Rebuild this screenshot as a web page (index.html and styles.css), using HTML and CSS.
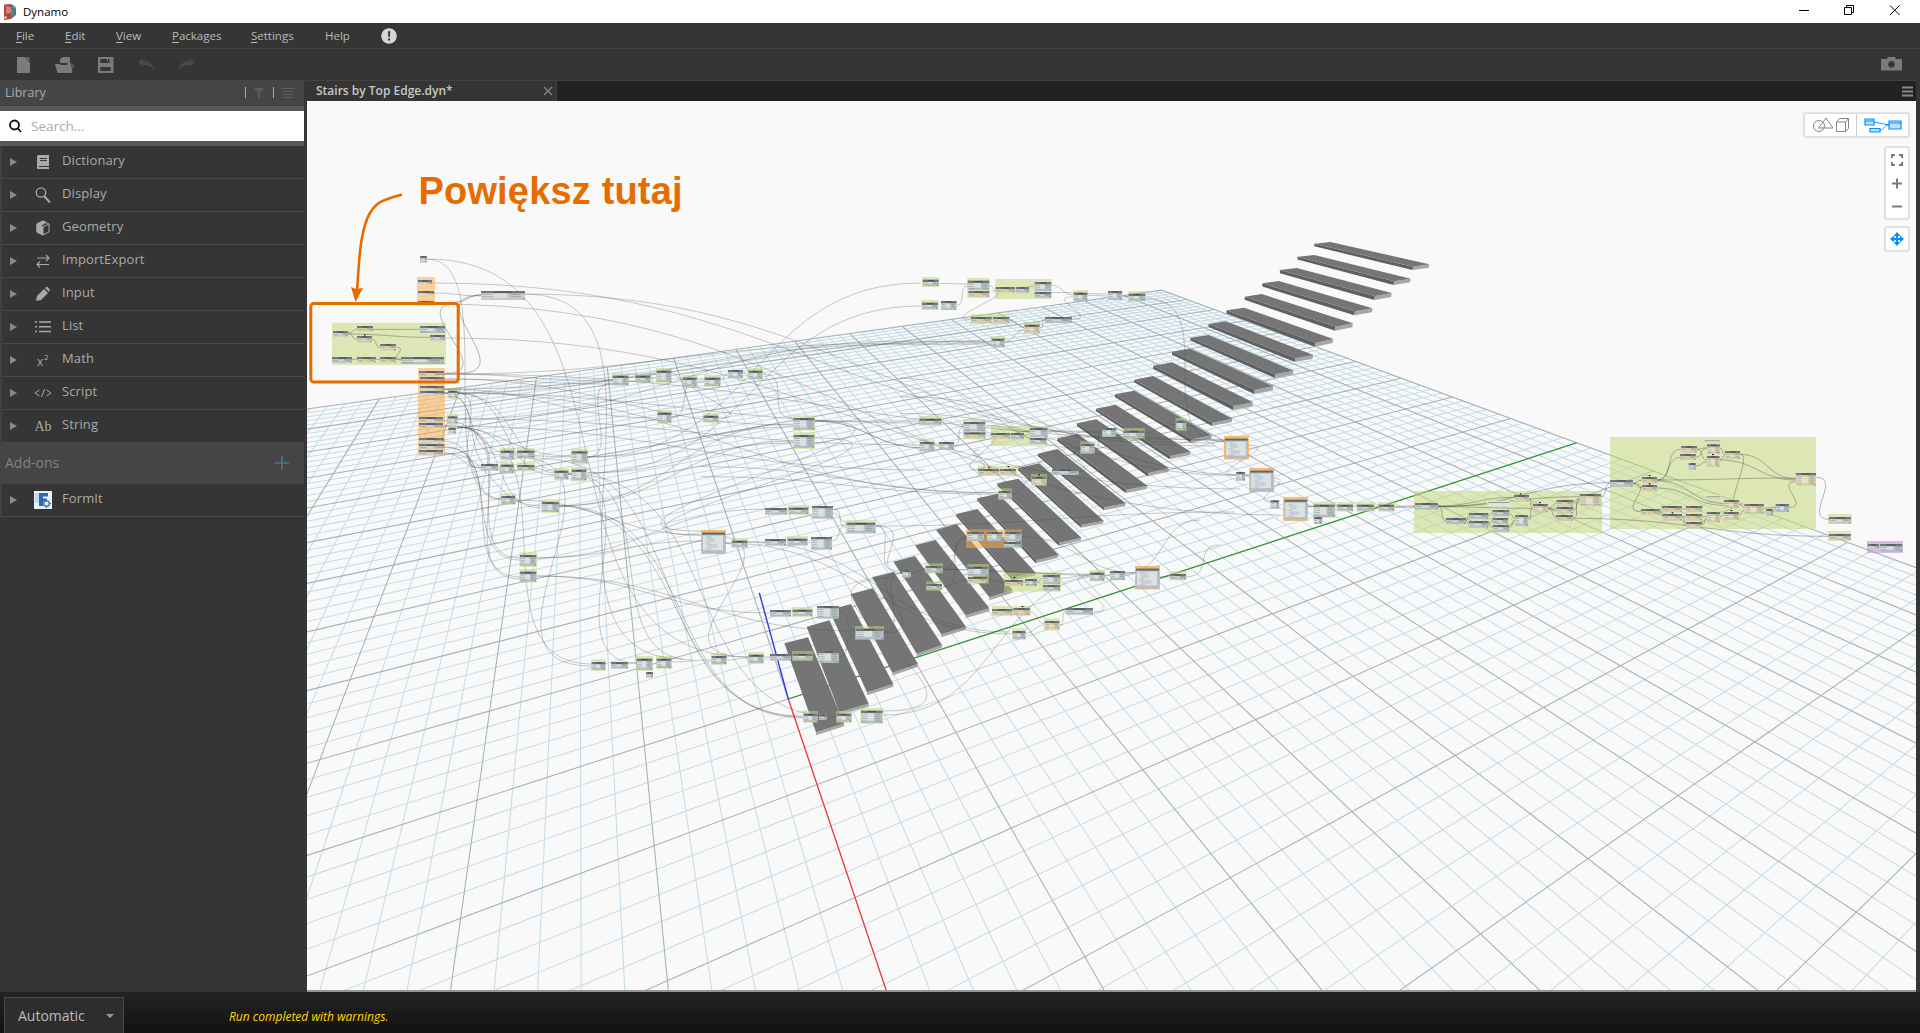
FILE: index.html
```html
<!DOCTYPE html>
<html lang="pl">
<head>
<meta charset="utf-8">
<title>Dynamo</title>
<link rel="stylesheet" href="styles.css">
</head>
<body>
<header class="titlebar">
  <svg class="app-icon" width="14" height="18" viewBox="0 0 14 18"><path d="M1 1.500l7-.5v15l-7 1z" fill="#a8453f"/><path d="M3 3l5 1v6l-5 1z" fill="#c9837c"/><path d="M8 1l5 3v8l-5 4z" fill="#4f7486"/><path d="M8 5l3 2v5l-3 2z" fill="#5a8a68"/><circle cx="2.500" cy="14.500" r="1.300" fill="#cfe0d8"/><circle cx="11.500" cy="4.500" r="1" fill="#8fc0e0"/><circle cx="2.500" cy="3" r="1" fill="#e05a4a"/></svg>
  <span class="app-name">Dynamo</span>
  <svg class="win-buttons" width="100" height="23" viewBox="0 0 100 23" fill="none" stroke="#000"><path d="M3 10.500h10M48.500 7.500h7v7h-7zM50.500 7.500v-2h7v7h-2M94 5.500l9.500 9.500M103.500 5.500L94 15"/></svg>
</header>
<nav class="menubar">
  <span class="m-file"><u>F</u>ile</span><span class="m-edit"><u>E</u>dit</span><span class="m-view"><u>V</u>iew</span><span class="m-packages"><u>P</u>ackages</span><span class="m-settings"><u>S</u>ettings</span><span class="m-help">Help</span>
  <svg width="16" height="16" viewBox="0 0 16 16"><circle cx="8" cy="8" r="7.800" fill="#d6d6d6"/><path d="M7 3.200h2.200l-.4 6H7.400zM7.100 10.600h2v2h-2z" fill="#333"/></svg>
</nav>
<div class="toolbar">
  <svg width="200" height="24" viewBox="0 0 200 24">
    <g fill="#7b7b7b"><path d="M17 4h7l6 6v10H17z"/><path d="M24 4h5.500v6z" fill="#666"/><path d="M60 10V6l3-2h7v6zM55 11h4.500l1.500 1h6l1-2h3l1.500 10H57.500zM72.500 12l1.500-1-1.500 6z"/><path fill-rule="evenodd" d="M98 4h15.500v16H98zM100.300 6v4h9.200V6zM100.300 14v4h10.400v-4z"/><path d="M107 6h1v2.500h-1z"/></g>
    <g fill="#454a4a"><path d="M138 9l5-4v2.500c6 0 10 4 12 10-4-4-7-5.500-12-5.500V13z"/><path d="M195 9l-5-4v2.500c-6 0-10 4-12 10 4-4 7-5.500 12-5.500V13z"/></g>
  </svg>
  <svg class="camera" width="21" height="15" viewBox="0 0 21 15"><path fill="#7b7b7b" fill-rule="evenodd" d="M0 2h6l1-2h7l1 2h6v11.500H0zM10.500 4a3.400 3.400 0 1 0 .01 0z"/></svg>
</div>
<main class="main">
  <aside class="sidebar">
    <div class="lib-head"><span>Library</span><svg width="46" height="14" viewBox="0 0 46 14"><path d="M1.500 1v11M29.500 1v11" stroke="#aaa"/><path d="M10 2h10l-4 5v6l-2-2V7z" fill="#5b5b5b"/><path d="M38 2.500h12M38 5.500h12M38 8.500h12M38 11.500h12" stroke="#5b5b5b"/></svg></div>
    <div class="search"><svg width="13" height="14" viewBox="0 0 13 14" fill="none" stroke="#111" stroke-width="1.800"><circle cx="5.500" cy="6" r="4.500"/><path d="M8.500 9l3.500 4"/></svg><span>Search...</span></div>
    <ul class="lib-list">
      <li><i></i><svg viewBox="0 0 18 18"><path fill="#a9a9a9" fill-rule="evenodd" d="M4 2h11v11H5v1h10v2H3V3zM6 5v1h7V5zM6 7v1h7V7z"/></svg><span>Dictionary</span></li>
      <li><i></i><svg viewBox="0 0 18 18" fill="none" stroke="#a9a9a9" stroke-width="1.300"><circle cx="7" cy="6.500" r="4.700"/><path d="M10 10l6 6.500" stroke-width="1.900"/></svg><span>Display</span></li>
      <li><i></i><svg viewBox="0 0 18 18" stroke="#a9a9a9" fill="none"><path d="M3 5l6-3 6 3v8l-6 3-6-3z"/><path d="M3 5l6 3v8l-6-3zM3 5l6-3 3 1.500-5 3z" fill="#a9a9a9"/><path d="M9 8l6-3"/></svg><span>Geometry</span></li>
      <li><i></i><svg viewBox="0 0 18 18" fill="none" stroke="#a9a9a9" stroke-width="1.200"><path d="M3 6h12M12 3l3 3-3 3M15 12.500H3M6 9.500l-3 3 3 3"/></svg><span>ImportExport</span></li>
      <li><i></i><svg viewBox="0 0 18 18" fill="#a9a9a9"><path d="M2 16l1-5 7-7 4 4-7 7zM11 3l2-1.500 3 3L15 7z"/></svg><span>Input</span></li>
      <li><i></i><svg viewBox="0 0 18 18" stroke="#a9a9a9" stroke-width="1.500"><path d="M1 4h2M5 4h12M1 8.700h2M5 8.700h12M1 13.500h2M5 13.500h12"/></svg><span>List</span></li>
      <li><i></i><svg viewBox="0 0 18 18"><text x="3" y="15" class="glyph">x</text><text x="10" y="9" class="glyph sup">2</text></svg><span>Math</span></li>
      <li><i></i><svg viewBox="0 0 18 18" fill="none" stroke="#a9a9a9"><path d="M5.500 6L1 9l4.500 3M12.500 6L17 9l-4.500 3M10.500 5l-3 8"/></svg><span>Script</span></li>
      <li><i></i><svg viewBox="0 0 18 18"><text x="0.500" y="14" class="glyph serif">Ab</text></svg><span>String</span></li>
    </ul>
    <div class="addons"><span>Add-ons</span><svg width="14" height="14" viewBox="0 0 14 14" stroke="#40788a" stroke-width="1.700"><path d="M7 0v14M0 7h14"/></svg></div>
    <ul class="lib-list"><li><i></i><svg viewBox="0 0 18 18"><path fill="#e8eff8" d="M0 0h18v18H0z"/><path fill="#c3d8ef" d="M1 2h4v10H1z"/><path fill="#286bb0" d="M5 2h9v3.500H9v2h4v3H9V15H5z"/><circle cx="12.500" cy="12.500" r="2.800" fill="#e8eff8" stroke="#4777a8" stroke-width="1.400"/><path d="M12.500 8v1.500M12.500 15.500V17M8 12.500h1.500M15.500 12.500H17" stroke="#4777a8"/></svg><span>FormIt</span></li></ul>
  </aside>
  <section class="workspace">
    <div class="tabs"><div class="tab"><span>Stairs by Top Edge.dyn*</span><svg width="10" height="10" viewBox="0 0 10 10" stroke="#858585" stroke-width="1.400"><path d="M1 1l8 8M9 1L1 9"/></svg></div><svg class="tab-menu" width="11" height="11" viewBox="0 0 11 11" stroke="#8a8a8a" stroke-width="2"><path d="M0 1.500h11M0 5.500h11M0 9.500h11"/></svg></div>
    <div class="canvas">
      <svg id="stage" width="1609" height="889" viewBox="307 101 1609 889">
        <g id="grid"></g><g id="stairs"></g><g id="groups"></g><g id="wires"></g><g id="nodes"></g>
        <g fill="none" stroke="#e66c00" stroke-width="3"><rect x="310.800" y="303.500" width="147.400" height="78.600" rx="3"/><path d="M402 194.500C382 200 374 202 367 219C359 240 359 268 357 290" stroke-width="2.600"/></g>
        <path d="M351 287l5 2 7-1-7.500 14z" fill="#e66c00"/>
        <text class="callout" x="418.500" y="204" textLength="264">Powiększ tutaj</text>
      </svg>
      <div class="view-toggle">
        <div><svg width="38" height="16" viewBox="0 0 38 16" fill="none" stroke="#858585"><circle cx="7" cy="9" r="5.500"/><path d="M14 1L6.500 11H21zM24.500 5h9v9.500h-9zM24.500 5l3-3.500h9v10l-3 3M33.500 5l3-3.500"/></svg></div>
        <div><svg width="38" height="16" viewBox="0 0 38 16" fill="#bfe3ff" stroke="#0091ff" stroke-width="1.200"><path d="M1 2h9v6H1zM1 4h9M6 11.500h10V15H6zM25 4h12v8H25zM25 6h12"/><path d="M10 5l15 3M16 13c5 0 3-5 9-5" fill="none" stroke-width=".9"/></svg></div>
      </div>
      <div class="zoom-box"><svg width="24" height="72" viewBox="0 0 24 72" fill="none" stroke="#7a7a7a" stroke-width="2"><path d="M7 11V8h3M14 8h3v3M17 15v3h-3M10 18H7v-3M7 36.500h10M12 31.500v10M7 59.500h10"/></svg></div>
      <div class="pan-box"><svg width="24" height="24" viewBox="0 0 24 24" stroke="#0091ff" stroke-width="2" fill="#0091ff"><path d="M12 8v8M8 12h8"/><path stroke="none" d="M12 5l3.500 4h-7zM12 19l3.500-4h-7zM5 12l4-3.500v7zM19 12l-4-3.500v7z"/></svg></div>
    </div>
  </section>
</main>
<footer class="statusbar">
  <div class="run-mode"><span>Automatic</span><b></b></div>
  <em>Run completed with warnings.</em>
</footer>
<script src="scene.js"></script>
</body>
</html>
```
FILE: styles.css
```css
* { box-sizing: border-box; }
body { margin: 0; width: 1920px; height: 1033px; overflow: hidden; display: flex; flex-direction: column; background: #353535; color: #b9b9b9; font: 12px "Open Sans", sans-serif; }
.titlebar { height: 23px; flex: none; background: #fff; color: #000; display: flex; align-items: center; padding-left: 3px; }
.app-name { margin-left: 6px; font-size: 11.5px; }
.win-buttons { margin-left: auto; margin-right: 24px; overflow: visible; }
.menubar { height: 26px; flex: none; border-bottom: 1px solid #444; display: flex; align-items: center; padding-left: 16px; font-size: 11.5px; }
.menubar u { text-underline-offset: 2px; }
.m-file { width: 49px; }
.m-edit { width: 51px; }
.m-view { width: 56px; }
.m-packages { width: 79px; }
.m-settings { width: 74px; }
.m-help { width: 56px; }
.toolbar { height: 31px; flex: none; display: flex; align-items: center; justify-content: space-between; }
.camera { margin-right: 18px; }
.main { display: flex; height: 912px; flex: none; }
.sidebar { width: 304px; flex: none; }
.lib-head { height: 26px; background: #454545; display: flex; align-items: center; justify-content: space-between; padding: 0 12px 1px 5px; font-size: 12.5px; color: #aaa; }
.lib-head svg { overflow: visible; margin-right: 2px; }
.search { height: 40px; border: solid #595959; border-width: 5px 0; background: #fff; display: flex; align-items: center; padding: 0 0 1px 9px; gap: 9px; color: #aaa; font-size: 13.5px; }
.lib-list { list-style: none; margin: 0; padding: 0; border-left: 2px solid #404040; }
.lib-list li { height: 33px; border-bottom: 1px solid #494949; display: flex; align-items: center; padding-left: 8px; font-size: 13px; color: #aaa; }
.lib-list li > span { letter-spacing: .12px; padding-bottom: 5px; }
.lib-list i { border-left: 7px solid #8a8a8a; border-top: 4px solid transparent; border-bottom: 4px solid transparent; margin-right: 17px; }
.lib-list svg { width: 18px; height: 18px; margin-right: 10px; }
.glyph { fill: #a9a9a9; font: 12px "Open Sans", sans-serif; }
.glyph.sup { font-size: 8px; }
.glyph.serif { font: 14px "Liberation Serif", serif; }
.addons { height: 41px; background: #454545; display: flex; align-items: center; justify-content: space-between; padding: 0 15px 2px 5px; font-size: 14px; color: #828282; }
.workspace { width: 1609px; margin-left: 3px; display: flex; flex-direction: column; }
.tabs { height: 21px; background: #222; border-top: 1px solid #414141; display: flex; align-items: center; justify-content: space-between; padding-right: 3px; }
.tab { width: 250px; height: 20px; background: #353535; border-right: 1px solid #444; display: flex; align-items: center; justify-content: space-between; padding: 0 3px 0 9px; font-size: 12px; font-weight: 600; color: #c8c8c8; }
.tab span { padding-bottom: 2px; }
.canvas { position: relative; height: 891px; background: #f9f9f9; border-bottom: 2px solid #969696; overflow: hidden; }
#stage { display: block; }
.view-toggle, .zoom-box, .pan-box { position: absolute; background: #fff; border: 1px solid #ddd; border-radius: 2px; box-shadow: 0 0 2px #aaa; display: flex; align-items: center; justify-content: center; }
.view-toggle { left: 1497px; top: 12px; width: 105px; height: 24px; }
.view-toggle div { flex: 1; height: 22px; display: flex; align-items: center; justify-content: center; }
.view-toggle div + div { border-left: 1px solid #ccc; }
.zoom-box { left: 1578px; top: 46px; width: 24px; height: 72px; }
.pan-box { left: 1578px; top: 126px; width: 24px; height: 24px; }
.zoom-box svg, .pan-box svg { flex: none; }
.callout { font: bold 38px "Liberation Sans", sans-serif; fill: #e66c00; }
.statusbar { height: 41px; flex: none; background: linear-gradient(#232323, #121212); display: flex; }
.run-mode { margin: 5px 0 0 4px; width: 120px; height: 36px; border: 1px solid #4a4a4a; border-bottom: 0; background: #2d2d2d; display: flex; align-items: center; justify-content: space-between; padding: 0 9px 0 13px; font-size: 14px; color: #bebebe; }
.run-mode b { border-top: 4px solid #999; border-left: 4px solid transparent; border-right: 4px solid transparent; }
.statusbar em { margin: 16px 0 0 105px; font-size: 12px; color: #ffd800; }
```
FILE: scene.js
```js
const NS = 'http://www.w3.org/2000/svg';
const layer = id => document.getElementById(id);
function add(parent, tag, attrs) {
  const e = document.createElementNS(NS, tag);
  for (const k in attrs) e.setAttribute(k, attrs[k]);
  parent.appendChild(e);
}

// Ground plane: perspective projection of a 100 x 100 unit grid.
function project(u, v) {
  const a = 0.024146 * u, b = 0.013953 * v, w = 1 + a + b;
  return [(788.3 + a * 578.7 + b * 2707) / w, (699 + (a + b) * 75.5) / w, w];
}
function segment(u1, v1, u2, v2, color, width) {
  const w1 = 1 + 0.024146 * u1 + 0.013953 * v1, w2 = 1 + 0.024146 * u2 + 0.013953 * v2, near = 0.2;
  if (w1 < near && w2 < near) return;
  if (w1 < near) { const t = (near - w1) / (w2 - w1); u1 += (u2 - u1) * t; v1 += (v2 - v1) * t; }
  else if (w2 < near) { const t = (near - w2) / (w1 - w2); u2 += (u1 - u2) * t; v2 += (v1 - v2) * t; }
  const p = project(u1, v1), q = project(u2, v2);
  add(layer('grid'), 'path', { d: `M${p[0]} ${p[1]}L${q[0]} ${q[1]}`, stroke: color, 'stroke-width': width, fill: 'none' });
}
for (const major of [false, true])
  for (let i = -50; i <= 50; i++) {
    if ((i % 5 === 0) !== major) continue;
    const c = major ? '#a3b1b9' : '#c6dce8';
    segment(i, -50, i, 50, c, 1.05); segment(-50, i, 50, i, c, 1.05);
  }
segment(0, 0, 0, 50, '#2d9a2d', 1.2);
segment(0, 0, -50, 0, '#ff3030', 1.2);
add(layer('grid'), 'path', { d: 'M759.3 592.7L788.3 699', stroke: '#3535f0', 'stroke-width': 1.4 });

// Treads: left-front, left-back, right-back, right-front corners, then thickness.
const upper = [
[1203,11,1250,6,1537,73,1490,80,10],[1154,50,1203,45,1483,116,1435,124,11],[1103,90,1152,84,1428,159,1379,168,12],
[1052,130,1100,123,1372,205,1321,214,12],[1001,170,1050,162,1315,250,1265,260,12],[948,211,1000,203,1258,297,1207,308,12],
[896,252,946,244,1200,345,1148,355,11],[843,293,896,285,1143,392,1090,403,11],[790,335,842,326,1084,439,1030,450,12],
[735,377,790,367,1025,487,969,498,12],[680,419,735,408,965,536,907,548,10],[624,463,680,452,905,586,847,598,10],
[569,506,626,494,844,635,785,648,10],[514,550,570,538,781,685,721,699,10],[457,595,516,582,718,737,657,749,10]];
const lower = [
[1013,-19,1072,-33,1277,130,1213,142],[954,24,1018,10,1211,182,1145,195],[892,70,955,56,1144,233,1078,248],
[832,115,894,101,1076,285,1009,301],[769,162,832,147,1007,338,940,353],[708,210,770,193,938,390,868,412],
[645,256,707,240,868,445,797,466],[580,305,645,288,798,500,724,523],[516,352,582,336,726,555,650,581],
[452,402,518,385,654,612,577,638],[387,450,453,432,580,672,501,697],[320,500,388,481,506,731,418,756],[253,550,324,532,432,790,348,817]];
function tread(s, X, Y, t, side) {
  const p = [0, 2, 4, 6].map(i => [X(s[i]), Y(s[i + 1])]), g = layer('stairs');
  const poly = (pts, fill) => add(g, 'polygon', { points: pts.map(q => q.join()).join(' '), fill });
  const dn = q => [q[0] - (side ? .6 : 0), q[1] + t];
  if (side) poly([p[0], p[3], dn(p[3]), [p[0][0], p[0][1] + t * .8]], '#606060');
  poly([p[3], p[2], dn(p[2]), dn(p[3])], '#a6a6a6');
  poly(p, '#757575');
}
upper.forEach(s => tread(s, x => 900 + x / 2.9037, y => 240 + y / 3, s[8] / 3, true));
lower.forEach((s, i) => tread(s, x => 700 + x / 3, y => 460 + y / 3, 2.8, i < 5));

const groupFill = { g: '#c1d676', o: '#ffa73f', p: '#bb84cc' };
const body = { b: '#b3bfc2', t: '#d4cca8', w: '#cbc7bf' };
function group(c, x, y, w, h, k = 'g') {
  add(layer('groups'), 'rect', { x: c.X(x), y: c.Y(y), width: w / c.kx, height: h / c.ky, fill: groupFill[k], opacity: .52 });
}
function node(c, x, y, w, h, k = 'b') {
  const g = layer('nodes'), X = c.X(x), Y = c.Y(y), W = w / c.kx, H = h / c.ky;
  const r = (x, y, width, height, fill, opacity = 1) => add(g, 'rect', { x, y, width, height, fill, opacity });
  r(X, Y, W, H, body[k]);
  r(X, Y, W, 2.3, '#70777a');
  r(X + W * .3, Y + .5, W * .4, 1, '#444b4e');
  const mid = Math.max(1.2, H - 4.6);
  r(X + .5, Y + 2.4, W * .58, mid, k === 't' ? '#e8dfcb' : '#dadfe1');
  for (let q = Y + 3; q < Y + H - 1.5; q += 2.3) {
    r(X + 1, q, W * .25, .8, '#8d9394', .7);
    r(X + W - W * .32, q, W * .22, .9, '#8b9698', .7);
  }
  if (k === 't') r(X + W * .38, Y + 2.5, W * .22, 1.5, '#e5bd72', .7);
  r(X + W - 1.6, Y + H - 1.4, 1.1, .9, '#5f686b');
}
function framed(c, x, y, w, h, k) { group(c, x, y, w, h); node(c, x + 2, y + 8, w - 4, h - 11, k); }
function code(c, x, y, w, h) {
  group(c, x, y, w, h, 'o'); group(c, x, y, w, h, 'o');
  const g = layer('nodes'), X = c.X(x) + 1, Y = c.Y(y) + 2.6, W = w / c.kx - 2, H = h / c.ky - 3.4;
  add(g, 'rect', { x: X, y: Y, width: W, height: H, fill: '#b3bfc2' });
  add(g, 'rect', { x: X, y: Y, width: W, height: 2, fill: '#5f696c' });
  add(g, 'rect', { x: X + 1, y: Y + 3, width: W - 3, height: H - 6, fill: '#dbe2e3' });
  [6, 8, 7, 5, 11, 9, 6].forEach((n, i) => add(g, 'rect', { x: X + 3.5 + i % 3, y: Y + 4 + i * 2, width: n, height: .7, fill: i > 3 ? '#b5a5bf' : '#a5aeb0' }));
}
const frame = (x, y, kx, ky) => ({ X: v => x + v / kx, Y: v => y + v / ky, kx, ky });
function cluster(c, { groups = [], nodes = [], framed: f = [], codes = [] }) {
  groups.forEach(a => group(c, ...a)); f.forEach(a => framed(c, ...a));
  nodes.forEach(a => node(c, ...a)); codes.forEach(a => code(c, ...a));
}
const A = frame(300, 150, 3, 3), B = frame(400, 360, 3, 3), C = frame(700, 460, 3, 3);
const D = frame(900, 240, 2.9037, 3), E = frame(1300, 400, 2.529, 3), P = frame(0, 0, 1, 1);

cluster(A, {
  groups: [[96,518,342,127],[351,381,54,86,'o'],[354,654,81,263,'o']],
  nodes: [[360,318,21,20,'w'],[543,423,132,27,'w'],[99,543,45,17,'w'],[171,528,48,16,'t'],[171,558,45,20,'t'],[240,582,48,20,'t'],[360,528,75,21],[390,555,45,17,'w'],[96,621,60,17],[171,621,57,17,'t'],[240,621,48,17,'t'],[303,621,129,21],
    [354,390,42,12,'w'],[354,423,48,10,'w'],[354,453,48,9,'w'],[357,663,75,14,'w'],[360,681,72,13,'w'],[360,708,72,13,'w'],[360,723,72,12,'w'],[357,801,72,14,'w'],[357,819,72,14,'w'],[357,864,75,11,'w'],[357,882,75,14,'w'],[357,900,72,14,'w'],[445,833,23,18,'w'],[1284,660,45,25]],
  framed: [[442,714,33,33,'w'],[441,791,33,33,'w'],[936,669,51,39],[1005,669,48,30],[1068,654,48,45],[1146,675,46,37],[1212,675,51,36],[1344,654,45,36],[1071,780,45,40],[1209,789,48,30]]
});
cluster(B, {
  nodes: [[243,312,51,20],[1095,444,66,20],[1236,438,63,38],[1095,537,63,20],[1233,531,63,38],[1110,750,63,20],[1251,738,66,38],[1110,882,63,20],[1255,873,62,36],[633,906,51,20],[738,936,21,17,'w']],
  framed: [[300,264,44,36],[350,264,55,32],[513,266,51,45],[300,306,43,36],[350,307,55,27],[462,324,45,36],[513,321,48,43],[302,400,45,35],[424,418,54,41],[358,577,53,44],[358,627,53,41],[1179,166,66,46],[1179,217,66,50],[1164,435,63,30],[1338,480,90,42],[1161,528,63,30],[994,534,50,30],[1176,741,63,30],[1365,798,87,42],[1176,873,63,30],[933,880,48,35],[1044,876,48,36],[573,898,45,35],[708,888,51,45],[768,888,48,39]],
  codes: [[903,510,75,72]]
});
cluster(C, {
  groups: [[834,18,118,30],[798,208,168,56,'o'],[802,312,65,59],[912,337,171,58],[876,438,116,30]],
  nodes: [[834,27,63,18,'t'],[900,27,48,18,'t'],[1056,27,81,18],[801,216,51,27],[861,216,46,27],[914,216,50,27],[911,246,51,15],[606,330,27,23],[804,320,61,28],[804,351,58,18,'t'],[915,360,54,18,'t'],[975,357,36,21],[1029,345,51,27],[1029,375,51,17],[1230,333,45,27],[876,447,61,18,'t'],[940,444,50,21,'t'],[1098,444,81,20],[357,763,24,17]],
  framed: [[993,42,48,36,'t'],[894,85,42,35],[675,310,54,30],[678,364,50,28],[1168,330,47,35],[1408,334,52,27],[1032,475,48,36,'t'],[936,505,42,35],[309,753,45,36],[408,753,48,36],[481,744,68,48]],
  codes: [[1305,318,75,70]]
});
cluster(D, {
  groups: [[195,114,66,60],[276,117,165,60],[205,222,114,30],[183,538,66,60],[264,558,165,60]],
  nodes: [[119,183,45,27],[197,122,62,28],[199,153,60,18,'t'],[278,141,56,17,'t'],[337,141,38,17],[391,126,48,27],[391,156,48,17],[604,153,41,27],[206,231,60,18,'t'],[270,231,47,18,'t'],[421,231,78,18],[113,606,44,24],[185,546,62,28],[186,577,62,18,'t'],[264,579,56,18,'t'],[322,579,38,18],[377,564,51,27],[377,594,48,18],[587,564,41,27],[976,696,26,26]],
  framed: [[64,111,50,30],[62,180,50,30],[503,150,43,36],[662,153,52,32],[360,246,47,36,'t'],[264,288,41,36],[55,528,67,29],[56,598,45,38],[646,564,65,33],[800,534,32,39],[523,604,43,38]],
  codes: [[941,588,72,70],[1014,684,72,72]]
});
code(P, 1283.4, 497.2, 24.5, 23.7);
node(P, 1270.6, 500.3, 8.5, 8.5);
cluster(E, {
  groups: [[288,273,476,126],[784,111,521,276],[1335,342,61,30],[1335,393,58,30],[1434,423,91,36,'p']],
  nodes: [[35,351,21,21],[291,309,58,20],[369,354,51,18],[427,339,49,18],[427,363,50,20],[487,330,42,18],[487,354,39,18],[487,375,42,20],[544,345,33,33],[541,285,38,20,'t'],[589,312,38,26,'t'],[649,300,42,20,'t'],[649,321,42,20,'t'],[647,345,43,18,'t'],[708,282,53,36,'t'],
    [784,240,58,20],[964,138,40,20,'t'],[961,162,40,18,'t'],[983,189,18,20],[1029,133,33,28,'t'],[1029,168,32,33,'t'],[1075,153,38,24,'t'],[865,231,38,18,'t'],[865,255,38,18,'t'],[1072,300,38,24,'t'],[1124,312,49,30,'t'],[1179,327,17,20],[1203,312,34,24],[862,327,48,18,'t'],[915,318,51,18,'t'],[917,342,49,20,'t'],[976,318,41,18,'t'],[976,342,41,20,'t'],[976,366,41,20,'t'],[1029,336,33,32,'t'],[1072,336,38,24,'t'],[1254,219,51,38,'t'],
    [1338,351,55,20,'w'],[1338,402,55,18,'w'],[1436,432,28,12],[1467,432,56,24]],
  framed: [[33,306,57,48],[93,306,43,29],[142,306,47,29],[197,306,43,29]]
});
// Free-standing notes and warning badges.
[[473,303,60,15],[1021,118,45,8],[1026,286,40,7]].forEach(n => {
  const a = { x: E.X(n[0]), y: E.Y(n[1]), width: n[2] / E.kx, height: n[3] / E.ky };
  add(layer('nodes'), 'rect', { ...a, fill: '#e4e2dd' });
  add(layer('nodes'), 'rect', { x: a.x + 1, y: a.y + 1, width: a.width - 2, height: .9, fill: '#8f8f8f' });
});
const dot = (c, x, y, fill) => add(layer('nodes'), 'rect', { x: c.X(x), y: c.Y(y), width: 1.6, height: 1.1, fill });
[[556,280],[605,306],[882,225],[882,250],[1042,162],[940,337],[1089,330]].forEach(d => dot(E, ...d, '#000'));
[[732,276],[982,132],[1090,145],[669,294],[938,312],[995,312],[1146,306],[1088,294],[1278,214],[1044,330],[995,337]].forEach(d => dot(E, ...d, '#f4e36a'));
[[865,22],[923,18],[1015,43],[941,351],[965,438]].forEach(d => dot(C, ...d, '#000'));
[[192,522],[262,577],[197,613],[262,613]].forEach(d => dot(A, ...d, '#f4e36a'));
dot(A, 192, 553, '#000');

// Connectors leave and arrive horizontally.
function wires(c, list, alpha = .28) {
  list.forEach(([x1, y1, x2, y2, k = .45]) => {
    const a = c.X(x1), b = c.Y(y1), e = c.X(x2), f = c.Y(y2), o = Math.hypot(e - a, f - b) * k;
    add(layer('wires'), 'path', { d: `M${a} ${b}C${a + o} ${b} ${e - o} ${f} ${e} ${f}`, fill: 'none', stroke: '#444', 'stroke-opacity': alpha, 'stroke-width': 1 });
  });
}
wires(P, [
[427,259,748,657],[427,259,503,500,.3],[433,283,1215,443],[434,293,481,296],[525,294,1215,446],[525,294,683,659],[434,304,1280,515],[445,338,1240,489],
[444,374,612,381],[444,374,1225,440],[444,379,793,425],[444,379,612,384],[444,389,657,418],[444,389,985,341],[444,393,500,455],[444,393,500,470],[444,393,925,423],[444,420,516,455],[444,426,925,470],[444,426,571,456],[444,441,503,499],[444,447,520,560],[444,447,520,577],[444,453,481,468],[444,453,541,506],
[457,393,481,468],[457,393,555,475],[457,419,925,445],[457,427,520,558],[457,427,520,579],[457,427,541,508],[457,393,994,493],[457,393,571,474],[457,427,591,664],
[534,456,571,457],[534,468,555,473],[515,457,591,666,.6],[568,474,637,663],[568,474,693,660],[587,457,612,383],[587,457,793,427],[587,473,793,443],[559,506,793,441],[559,506,793,424],[537,558,765,509],[537,558,701,541],[537,576,770,613],[537,576,855,631],[515,500,701,535],[559,506,803,717],[550,505,805,718],[535,458,803,716],[568,474,837,717],
[815,421,701,531,1.1],[815,438,701,535,1.1],[748,542,765,542],[724,543,732,544],[724,543,1012,634],[748,542,1010,632],
[833,513,846,522],[832,541,846,525],[876,526,905,573,.8],[839,611,855,630],[839,657,855,635],[883,633,905,573,.9],
[616,665,637,663],[672,662,711,660],[727,660,748,658],[748,657,770,657],[883,711,895,578,1.1],[628,374,637,374],[650,374,656,374],[672,373,682,380],[698,380,704,380],[721,380,728,373],[743,373,748,374],[763,374,793,418,.55],[671,418,698,378],[719,418,704,382,1.2],
[815,421,925,421],[815,421,925,448],[876,526,1235,512],[705,535,748,657,.9],
[587,457,921,283],[587,473,921,306],[815,421,925,448]]);
wires(C, [
[403,148,438,202],[527,197,582,330],[633,340,678,325],[730,328,800,230],[730,380,800,235],[730,328,802,330],[730,328,1168,342],[866,360,915,368],[730,380,802,360],[866,335,1168,345],[969,368,975,368],[1011,368,1029,355],[1080,355,1168,345],[1215,346,1230,346],[1275,346,1305,340],[1380,350,1408,350],[1179,456,1168,348,1.1],[1080,495,1098,456],[976,520,1032,495],[990,456,1032,490],[549,765,1235,345,.45],[1275,340,1500,180],[965,230,1305,338],[550,516,606,340],[936,102,993,62],[1040,62,1056,38],[834,28,840,-30,1.1],[0,20,894,98],[0,50,894,103],[1460,350,1560,255,.6]]);
wires(D, [[112,130,197,132],[164,196,197,138],[260,136,278,150],[335,150,391,138],[440,136,503,165],[440,157,604,162],[545,166,604,168],[645,168,662,170],[714,176,941,605,.48],[265,153,204,238,.9],[318,240,360,262],[407,265,421,238],[499,238,503,170,1.3],[0,304,264,304],[0,310,264,308],[0,314,264,312],[304,305,360,270],[121,540,185,560],[157,617,185,562],[250,556,377,575],[360,587,377,580],[428,573,587,574],[428,575,941,600],[566,626,587,578],[628,576,646,582],[695,582,800,553],[519,695,523,630,1],[830,555,941,606],[1013,615,976,705,1.1],[1002,707,1014,707],[1085,715,1075,785,1],[250,587,226,690,.9],[0,414,523,625],[0,470,1014,705],[0,520,976,706]]);
wires(P, [[457,419,900,341.300],[445,374,900,343.300],[445,393,900,344.600]]);
wires(E, [[0,307,35,320],[20,320,35,320],[90,320,95,320],[136,320,142,320],[188,320,198,320],[240,319,291,318],[240,322,291,321],[349,320,369,362],[349,318,541,292],[349,319,708,290],[349,320,784,248],[349,320,589,325],[420,362,427,348],[420,362,427,372],[476,348,487,338],[476,372,487,363],[476,372,487,383],[529,340,544,355],[529,383,544,360],[578,358,589,325],[578,295,589,322],[628,325,649,310],[628,325,649,330],[628,325,649,353],[691,310,708,295],[691,330,708,300],[691,353,708,305],[691,355,1338,409],[761,290,784,250],[842,250,865,240],[842,250,865,263],[842,250,862,335,.8],[903,240,964,148],[903,240,961,172],[903,240,1254,234],[903,242,1072,310],[903,264,1072,316],[1004,148,1029,143],[1004,148,1029,180],[1001,172,1029,145],[1001,198,1029,185],[1062,145,1075,163],[1062,180,1075,166],[1113,163,1254,237],[1062,180,1254,240],[1113,163,1105,320,.25],[910,336,917,327],[910,336,917,350],[966,327,976,327],[966,350,976,350],[966,350,976,374],[1017,350,1029,350],[1017,374,1029,355],[1062,350,1072,346],[1110,312,1124,322],[1110,346,1124,330],[1173,325,1203,322],[1196,337,1203,326],[1237,322,1254,245,.8],[1305,232,1338,358,.6]], .38);
wires(A, [[144,550,171,538],[144,550,171,568],[219,538,360,538],[144,552,390,562],[216,568,240,592],[288,592,303,628,1],[156,628,171,628],[228,628,240,628],[288,628,303,630],[470,455,543,434],[475,670,543,436,.8],[435,670,475,460,.8]], .38);
```
